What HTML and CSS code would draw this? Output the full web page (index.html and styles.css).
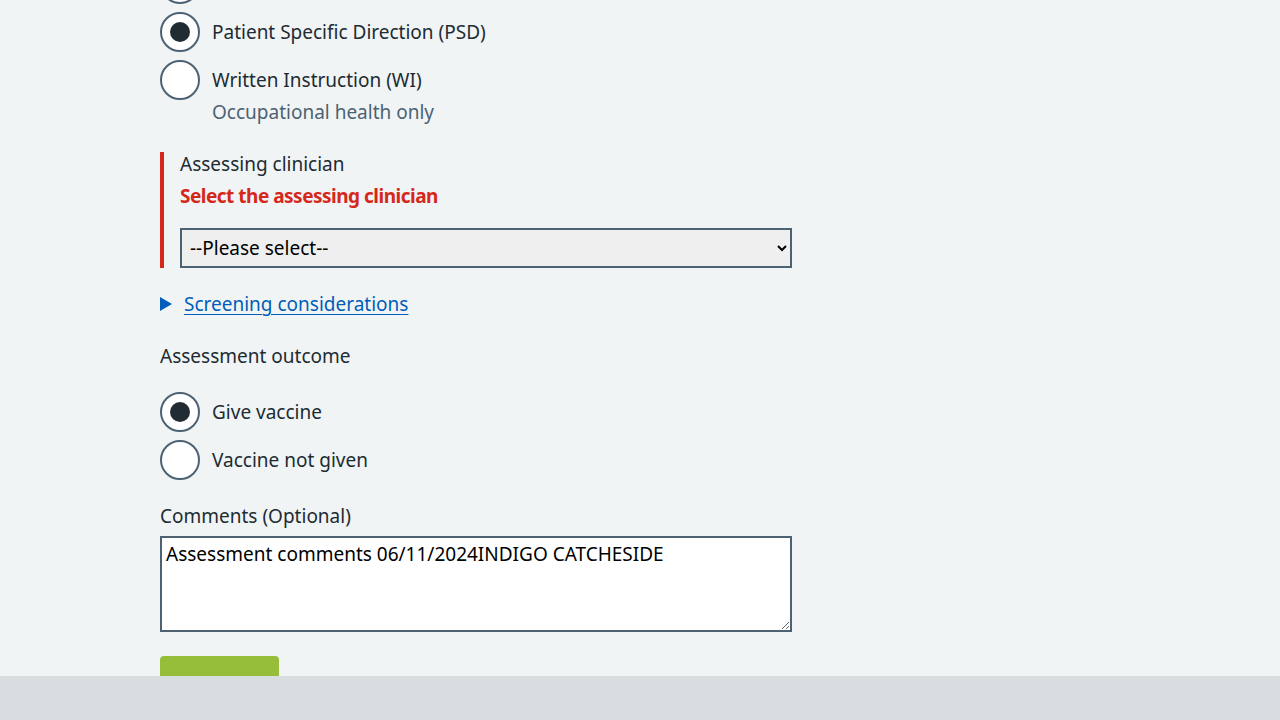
FILE: index.html
```html
<!DOCTYPE html>
<html lang="en">
<head>
<meta charset="utf-8">
<title>Assessment</title>
<link rel="stylesheet" href="styles.css">
</head>
<body>
<main class="page">
  <div class="form">
    <fieldset class="fieldset fieldset--legal">
      <div class="radios">
        <div class="radio-item">
          <input class="radio-input" type="radio" id="r0" name="legal" aria-label="Patient Group Direction (PGD)">
          <label class="radio-label" for="r0"></label>
        </div>
        <div class="radio-item">
          <input class="radio-input" type="radio" id="r1" name="legal" checked>
          <label class="radio-label" for="r1">Patient Specific Direction (PSD)</label>
        </div>
        <div class="radio-item">
          <input class="radio-input" type="radio" id="r2" name="legal">
          <label class="radio-label" for="r2">Written Instruction (WI)</label>
          <div class="radio-hint">Occupational health only</div>
        </div>
      </div>
    </fieldset>

    <div class="form-group form-group--error">
      <label class="label label--error" for="clinician">Assessing clinician</label>
      <span class="error-message">Select the assessing clinician</span>
      <select class="select" id="clinician">
        <option>--Please select--</option>
      </select>
    </div>

    <details class="details">
      <summary class="details-summary"><span class="details-text">Screening considerations</span></summary>
    </details>

    <fieldset class="fieldset fieldset--outcome">
      <legend class="label label--legend">Assessment outcome</legend>
      <div class="radios">
        <div class="radio-item">
          <input class="radio-input" type="radio" id="o1" name="outcome" checked>
          <label class="radio-label" for="o1">Give vaccine</label>
        </div>
        <div class="radio-item">
          <input class="radio-input" type="radio" id="o2" name="outcome">
          <label class="radio-label" for="o2">Vaccine not given</label>
        </div>
      </div>
    </fieldset>

    <div class="form-group form-group--comments">
      <label class="label label--comments" for="comments">Comments (Optional)</label>
      <textarea class="textarea" id="comments">Assessment comments 06/11/2024INDIGO CATCHESIDE</textarea>
    </div>

    <button class="button" type="button">Continue</button>
  </div>
</main>
<div class="bottom-bar"></div>
</body>
</html>
```

FILE: styles.css
```css
*, *::before, *::after { box-sizing: border-box; }
html, body { margin: 0; padding: 0; }
body {
  background: #f0f4f5;
  color: #212b32;
  font-family: "Noto Sans", "Liberation Sans", Arial, sans-serif;
  font-size: 19px;
  line-height: 28px;
  overflow: hidden;
  height: 720px;
}
.page { padding-left: 160px; }
.form { width: 632px; margin-top: -36px; }
.fieldset { border: 0; margin: 0; padding: 0; min-width: 0; }
.radios { display: flex; flex-direction: column; }
.radio-item { position: relative; min-height: 40px; padding-left: 40px; margin-bottom: 8px; }
.radio-input {
  position: absolute; left: 0; top: 0; margin: 0;
  width: 40px; height: 40px; opacity: 0; z-index: 1;
}
.radio-label { display: block; padding: 6px 12px 4px; cursor: pointer; }
.radio-label::before {
  content: ""; position: absolute; left: 0; top: 0;
  width: 40px; height: 40px; border: 2px solid #4c6272; border-radius: 50%; background: #fff;
}
.radio-label::after {
  content: ""; position: absolute; left: 10px; top: 10px;
  width: 20px; height: 20px; border-radius: 50%; background: #212b32; opacity: 0;
}
.radio-input:checked + .radio-label::after { opacity: 1; }
.radio-hint { color: #4c6272; padding: 0 12px; display: block; }
.fieldset--legal { margin-bottom: 18px; }
.form-group--error { border-left: 4px solid #d5281b; padding-left: 16px; display: flex; flex-direction: column; align-items: flex-start; margin-bottom: 22px; }
.label { display: block; margin-bottom: 4px; }
.label--error { margin-top: -2px; }
.error-message { color: #d5281b; font-weight: 700; letter-spacing: -0.5px; margin-bottom: 18px; display: block; }
.select {
  width: 612px; height: 40px; border: 2px solid #4c6272; border-radius: 0;
  background-color: #efefef; color: #000;
  font-family: inherit; font-size: 19px; padding: 0 4px; margin: 0;
}
.details { margin-bottom: 24px; }
.details-summary {
  display: inline-block; position: relative; padding-left: 24px; cursor: pointer; color: #005eb8; list-style: none;
}
.details-summary::-webkit-details-marker { display: none; }
.details-summary::before {
  content: ""; position: absolute; left: 0; top: 7px;
  border-style: solid; border-width: 7px 0 7px 12px;
  border-color: transparent transparent transparent #005eb8;
}
.details-text { text-decoration: underline; text-underline-offset: 3px; text-decoration-thickness: 1px; }
.label--legend { padding: 0; margin-bottom: 22px; }
.fieldset--outcome { margin-bottom: 14px; }
.label--comments { margin-bottom: 6px; }
.textarea {
  display: block; width: 632px; height: 96px; border: 2px solid #4c6272; border-radius: 0;
  background: #fff; color: #000; font-family: inherit; font-size: 19px; line-height: 28px;
  padding: 2px 4px; margin: 0 0 24px; resize: vertical;
}
.button {
  width: 119px; height: 52px; background: #97be3b; border: 0; border-radius: 4px;
  color: #5b6f8a; font-family: inherit; font-size: 19px; font-weight: 700; padding: 12px 16px 0 20px; text-align: left; margin: 0;
}
.bottom-bar { position: fixed; left: 0; right: 0; bottom: 0; height: 44px; background: #d8dde0; }
```
